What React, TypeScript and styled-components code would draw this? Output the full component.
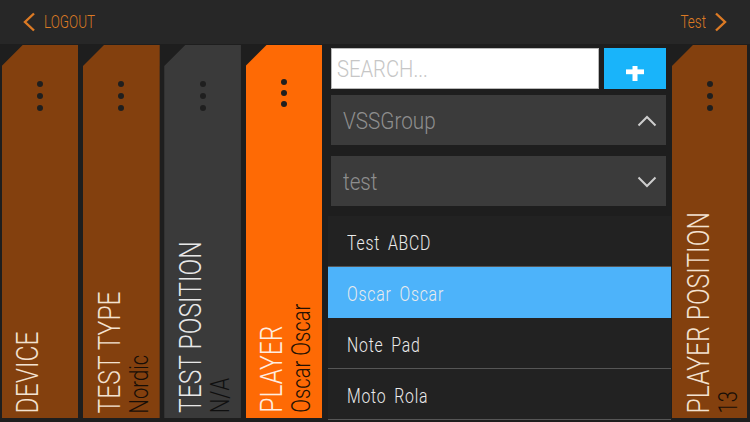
import React from 'react';
import styled, { createGlobalStyle } from 'styled-components';

const Global = createGlobalStyle`
  html, body { margin: 0; padding: 0; background: #1e1e1e; }
  body {
    width: 750px; height: 422px; overflow: hidden;
    font-family: Roboto, "Liberation Sans", sans-serif;
  }
  * { box-sizing: border-box; }
`;

const Screen = styled.div`
  width: 750px;
  height: 422px;
  display: flex;
  flex-direction: column;
  background: #1e1e1e;
`;

const TopBar = styled.header`
  height: 44px;
  flex: none;
  background: #272727;
  display: flex;
  align-items: center;
  justify-content: space-between;
  padding: 0 23px;
`;

const NavButton = styled.div`
  display: flex;
  align-items: center;
  gap: 8px;
  color: #dc7a24;
`;

const NavText = styled.span<{ $right?: boolean }>`
  display: inline-block;
  font-size: 19px;
  font-weight: 300;
  line-height: 20px;
  transform: scaleX(0.71);
  transform-origin: ${(p) => (p.$right ? 'right' : 'left')} center;
  ${(p) => (p.$right ? 'margin-left: -11px;' : 'margin-right: -20px;')}
`;

const Body = styled.main`
  flex: 1;
  display: flex;
  padding: 1px 0 4px 1.7px;
  min-height: 0;
`;

const Columns = styled.div`
  display: flex;
  gap: 4.6px;
`;

const tones = {
  brown: { bg: '#83400e', label: '#f3e2d1', value: '#170e07' },
  grey: { bg: '#3a3a3a', label: '#e8e8e8', value: '#0f0f0f' },
  orange: { bg: '#fe6a05', label: '#ffede0', value: '#241003' },
};
type Tone = keyof typeof tones;

const Column = styled.section<{ $tone: Tone; $w?: number }>`
  width: ${(p) => p.$w ?? 76.7}px;
  flex: none;
  height: 100%;
  background: ${(p) => tones[p.$tone].bg};
  clip-path: polygon(0 21px, 21px 0, 100% 0, 100% 100%, 0 100%);
  display: flex;
  flex-direction: column;
  padding: 0 0 5px 9.8px;
`;

const Dots = styled.div<{ $tight?: boolean }>`
  align-self: center;
  margin-left: -9.8px;
  margin-top: ${(p) => (p.$tight ? 34 : 36)}px;
  display: flex;
  flex-direction: column;
  gap: ${(p) => (p.$tight ? 5 : 6)}px;
`;

const Dot = styled.span`
  width: 6px;
  height: 6px;
  border-radius: 50%;
  background: #1f1f1f;
`;

const Spacer = styled.div`
  flex: 1;
`;

const LabelBlock = styled.div`
  writing-mode: vertical-rl;
  text-orientation: sideways;
  transform: rotate(180deg);
  align-self: flex-start;
  white-space: nowrap;
`;

const LabelLine = styled.div<{ $tone: Tone }>`
  display: block;
  font-size: 32px;
  line-height: 32px;
  font-weight: 300;
  color: ${(p) => tones[p.$tone].label};
  transform: scaleY(0.77);
  transform-origin: top;
`;

const ValueLine = styled.div<{ $tone: Tone }>`
  display: block;
  font-size: 25px;
  line-height: 29px;
  font-weight: 300;
  color: ${(p) => tones[p.$tone].value};
  transform: scaleY(0.81);
  transform-origin: top;
`;

const Panel = styled.div`
  width: 349.7px;
  flex: none;
  display: flex;
  flex-direction: column;
  padding-top: 3px;
`;

const SearchRow = styled.div`
  display: flex;
  gap: 5px;
  height: 41px;
  flex: none;
  margin: 0 6px 0 8.7px;
`;

const SearchBox = styled.div`
  flex: 1;
  background: #ffffff;
  border: 1px solid #b9b9b9;
  display: flex;
  align-items: center;
  padding-left: 5px;
  overflow: hidden;
`;

const Placeholder = styled.span`
  display: inline-block;
  font-size: 23.5px;
  font-weight: 300;
  color: #c6c6c6;
  transform: scaleX(0.86);
  transform-origin: left center;
  white-space: nowrap;
`;

const AddButton = styled.div`
  width: 62px;
  background: #19b4fa;
  display: flex;
  align-items: center;
  justify-content: center;
  padding-top: 9px;
`;

const Dropdown = styled.div<{ $gap: number }>`
  height: 50px;
  flex: none;
  margin: ${(p) => p.$gap}px 6px 0 8.7px;
  background: #3b3b3b;
  display: flex;
  align-items: center;
  justify-content: space-between;
  padding: 1px 9px 0 12px;
`;

const DropText = styled.span`
  display: inline-block;
  font-size: 23.5px;
  font-weight: 300;
  color: #8e8e8e;
  transform: scaleX(0.88);
  transform-origin: left center;
`;

const List = styled.ul`
  list-style: none;
  margin: 10px 1px 0 5.7px;
  padding: 0;
  background: #222222;
`;

const Row = styled.li<{ $active?: boolean }>`
  height: 51px;
  border-bottom: 1px solid ${(p) => (p.$active ? '#4db3fa' : '#565656')};
  background: ${(p) => (p.$active ? '#4db3fa' : 'transparent')};
  display: flex;
  align-items: center;
  padding: 3px 0 0 19px;
`;

const RowText = styled.span`
  display: inline-block;
  font-size: 20px;
  font-weight: 300;
  color: #ececec;
  letter-spacing: 1px;
  word-spacing: 4px;
  transform: scaleX(0.79);
  transform-origin: left center;
  white-space: nowrap;
`;

const Chevron = ({ dir }: { dir: 'left' | 'right' | 'up' | 'down' }) => {
  if (dir === 'left' || dir === 'right') {
    const d = dir === 'left' ? 'M11 1.5 L2 10 L11 18.5' : 'M2 1.5 L11 10 L2 18.5';
    return (
      <svg width="13" height="20" viewBox="0 0 13 20">
        <path d={d} fill="none" stroke="#dc7a24" strokeWidth="2.4" />
      </svg>
    );
  }
  const d = dir === 'up' ? 'M1.5 10.5 L10 2 L18.5 10.5' : 'M1.5 1.5 L10 10 L18.5 1.5';
  return (
    <svg width="20" height="12" viewBox="0 0 20 12">
      <path d={d} fill="none" stroke="#cdcdcd" strokeWidth="2" />
    </svg>
  );
};

const Plus = () => (
  <svg width="18" height="15" viewBox="0 0 18 15">
    <rect x="0" y="3.4" width="18" height="4.8" fill="#fff" />
    <rect x="6.5" y="0" width="5" height="15" fill="#fff" />
  </svg>
);

type Col = { tone: Tone; label: string; value?: string };
const cols: Col[] = [
  { tone: 'brown', label: 'DEVICE' },
  { tone: 'brown', label: 'TEST TYPE', value: 'Nordic' },
  { tone: 'grey', label: 'TEST POSITION', value: 'N/A' },
  { tone: 'orange', label: 'PLAYER', value: 'Oscar Oscar' },
];

const players = ['Test ABCD', 'Oscar Oscar', 'Note Pad', 'Moto Rola'];

const SideColumn = ({ c, w }: { c: Col; w?: number }) => (
  <Column $tone={c.tone} $w={w}>
    <Dots $tight={c.tone === 'orange'}>
      <Dot />
      <Dot />
      <Dot />
    </Dots>
    <Spacer />
    <LabelBlock>
      <LabelLine $tone={c.tone}>{c.label}</LabelLine>
      {c.value && <ValueLine $tone={c.tone}>{c.value}</ValueLine>}
    </LabelBlock>
  </Column>
);

export default function App() {
  return (
    <Screen>
      <Global />
      <TopBar>
        <NavButton>
          <Chevron dir="left" />
          <NavText>LOGOUT</NavText>
        </NavButton>
        <NavButton>
          <NavText $right>Test</NavText>
          <Chevron dir="right" />
        </NavButton>
      </TopBar>
      <Body>
        <Columns>
          {cols.map((c) => (
            <SideColumn key={c.label} c={c} />
          ))}
        </Columns>
        <Panel>
          <SearchRow>
            <SearchBox>
              <Placeholder>SEARCH...</Placeholder>
            </SearchBox>
            <AddButton>
              <Plus />
            </AddButton>
          </SearchRow>
          <Dropdown $gap={6}>
            <DropText>VSSGroup</DropText>
            <Chevron dir="up" />
          </Dropdown>
          <Dropdown $gap={11}>
            <DropText>test</DropText>
            <Chevron dir="down" />
          </Dropdown>
          <List>
            {players.map((p, i) => (
              <Row key={p} $active={i === 1}>
                <RowText>{p}</RowText>
              </Row>
            ))}
          </List>
        </Panel>
        <SideColumn c={{ tone: 'brown', label: 'PLAYER POSITION', value: '13' }} w={75.5} />
      </Body>
    </Screen>
  );
}
